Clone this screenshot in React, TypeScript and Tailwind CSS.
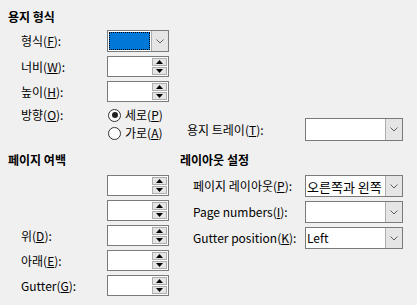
import React from 'react';

const Chevron = () => (
  <svg width="8" height="5" viewBox="0 0 8 5">
    <path d="M0.5 0.5 L4 4 L7.5 0.5" fill="none" stroke="#606060" strokeWidth="1" />
  </svg>
);

const Up = () => (
  <svg width="7" height="4" viewBox="0 0 7 4">
    <path d="M0 4 L3.5 0 L7 4 Z" fill="#000" />
  </svg>
);

const Down = () => (
  <svg width="7" height="4" viewBox="0 0 7 4">
    <path d="M0 0 L3.5 4 L7 0 Z" fill="#000" />
  </svg>
);

function DropBtn() {
  return (
    <div className="flex w-[17px] items-center justify-center border-l border-[#adadad] bg-[#e5e5e5]">
      <Chevron />
    </div>
  );
}

function Spin() {
  return (
    <div className="flex h-[21px] w-[62px] border border-[#7a7a7a] bg-white">
      <div className="flex-1" />
      <div className="flex w-[16px] flex-col gap-[1px] py-[1px] pr-[1px]">
        <div className="flex flex-1 items-center justify-center border border-[#adadad] bg-[#e5e5e5]">
          <Up />
        </div>
        <div className="flex flex-1 items-center justify-center border border-[#adadad] bg-[#e5e5e5]">
          <Down />
        </div>
      </div>
    </div>
  );
}

function Radio({ checked, children }: { checked?: boolean; children: React.ReactNode }) {
  return (
    <div className="flex h-[18px] items-center gap-[4px]">
      <span className="ml-[1px] flex h-[13px] w-[13px] items-center justify-center rounded-full border border-[#333333] bg-white">
        {checked && <span className="h-[6px] w-[6px] rounded-full bg-[#222222]" />}
      </span>
      <span>{children}</span>
    </div>
  );
}

export default function App() {
  return (
    <div className="h-[305px] w-[417px] overflow-hidden bg-[#f0f0f0] pl-[8px] pt-[6px] font-['Noto_Sans_CJK_KR','Noto_Sans',sans-serif] text-[12px] leading-none text-black">
      <div className="flex h-[22px] items-center font-bold">용지 형식</div>
      <div className="flex flex-col pl-[13px]">
        <div className="mt-[2px] flex h-[22px] items-center">
          <div className="w-[86px]">
            형식(<u>F</u>):
          </div>
          <div className="flex h-[22px] w-[62px] border border-[#7a7a7a] bg-white">
            <div className="flex-1 p-[1px]">
              <div className="h-full w-full border border-dotted border-black bg-[#0078d7]" />
            </div>
            <DropBtn />
          </div>
        </div>
        <div className="mt-[4px] flex h-[21px] items-center">
          <div className="w-[86px]">
            너비(<u>W</u>):
          </div>
          <Spin />
        </div>
        <div className="mt-[4px] flex h-[21px] items-center">
          <div className="w-[86px]">
            높이(<u>H</u>):
          </div>
          <Spin />
        </div>
        <div className="mt-[4px] flex">
          <div className="flex h-[18px] w-[86px] items-center">
            방향(<u>O</u>):
          </div>
          <div className="flex w-[80px] flex-col">
            <Radio checked>
              세로(<u>P</u>)
            </Radio>
            <Radio>
              가로(<u>A</u>)
            </Radio>
          </div>
          <div className="mb-[1px] flex items-center self-end">
            <div className="w-[118px]">
              용지 트레이(<u>T</u>):
            </div>
            <div className="flex h-[23px] w-[98px] border border-[#7a7a7a] bg-white">
              <div className="flex-1" />
              <DropBtn />
            </div>
          </div>
        </div>
      </div>

      <div className="mt-[7px] flex">
        <div className="flex w-[172px] flex-col">
          <div className="flex h-[22px] items-center font-bold">페이지 여백</div>
          <div className="flex flex-col pl-[13px]">
            <div className="mt-[4px] flex h-[21px] items-center">
              <div className="w-[86px]" />
              <Spin />
            </div>
            <div className="mt-[4px] flex h-[21px] items-center">
              <div className="w-[86px]" />
              <Spin />
            </div>
            <div className="mt-[4px] flex h-[21px] items-center">
              <div className="w-[86px]">
                위(<u>D</u>):
              </div>
              <Spin />
            </div>
            <div className="mt-[4px] flex h-[21px] items-center">
              <div className="w-[86px]">
                아래(<u>E</u>):
              </div>
              <Spin />
            </div>
            <div className="mt-[4px] flex h-[21px] items-center">
              <div className="w-[86px]">
                Gutter(<u>G</u>):
              </div>
              <Spin />
            </div>
          </div>
        </div>
        <div className="flex flex-col">
          <div className="flex h-[22px] items-center font-bold">레이아웃 설정</div>
          <div className="flex flex-col pl-[13px]">
            <div className="mt-[4px] flex h-[22px] items-center">
              <div className="w-[112px] whitespace-nowrap">
                페이지 레이아웃(<u>P</u>):
              </div>
              <div className="flex h-[22px] w-[98px] border border-[#7a7a7a] bg-white">
                <div className="flex flex-1 items-center overflow-hidden whitespace-nowrap pl-[1px] text-[13px]">
                  오른쪽과 왼쪽
                </div>
                <DropBtn />
              </div>
            </div>
            <div className="mt-[4px] flex h-[22px] items-center">
              <div className="w-[112px] whitespace-nowrap">
                Page numbers(<u>I</u>):
              </div>
              <div className="flex h-[22px] w-[98px] border border-[#7a7a7a] bg-white">
                <div className="flex-1" />
                <DropBtn />
              </div>
            </div>
            <div className="mt-[4px] flex h-[22px] items-center">
              <div className="w-[112px] whitespace-nowrap">
                Gutter position(<u>K</u>):
              </div>
              <div className="flex h-[22px] w-[98px] border border-[#7a7a7a] bg-white">
                <div className="flex flex-1 items-center pl-[1px]">Left</div>
                <DropBtn />
              </div>
            </div>
          </div>
        </div>
      </div>
    </div>
  );
}
